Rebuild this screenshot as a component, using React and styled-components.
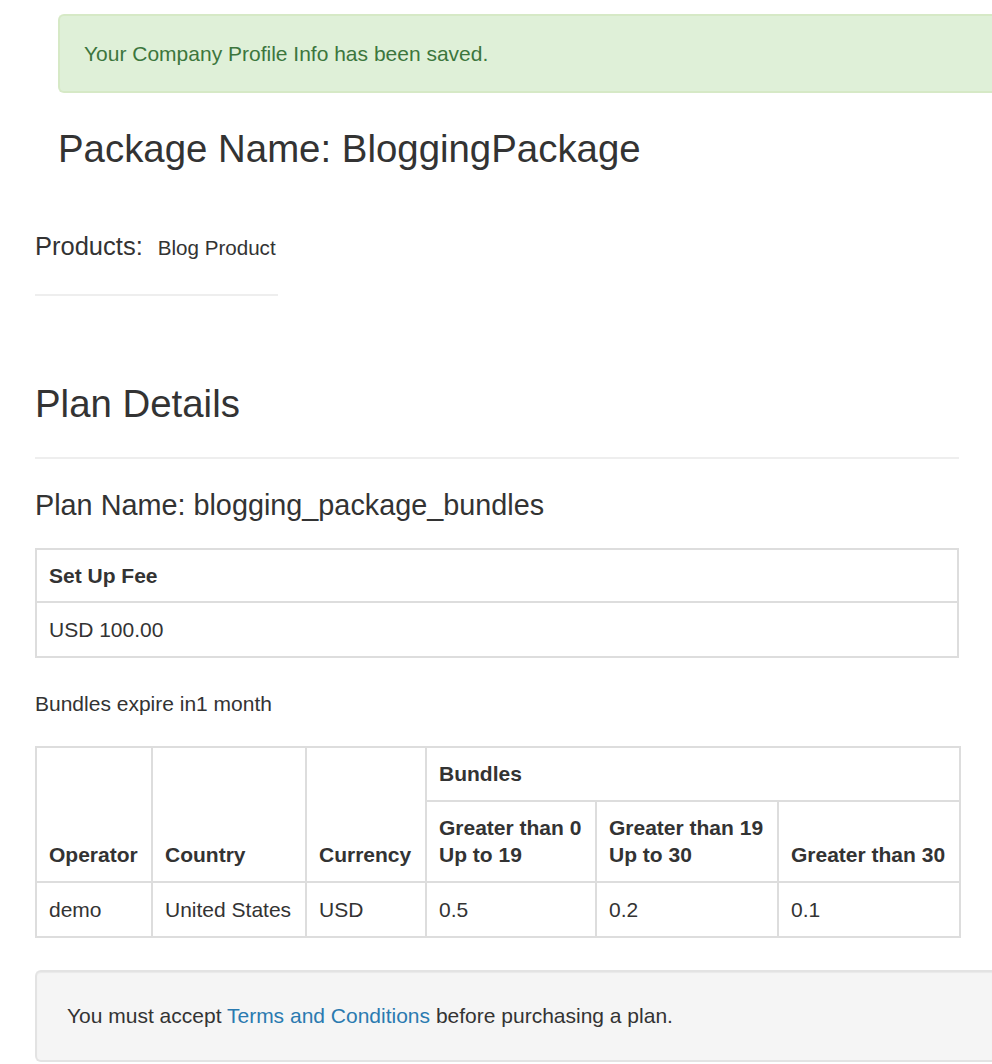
import React from 'react'
import styled, {createGlobalStyle} from 'styled-components';

const GlobalStyle = createGlobalStyle`
html, body {
  margin: 0;
  padding: 0;
  background: #fff;
  overflow-x: hidden;
}
body {
  font-family: "Liberation Sans", Helvetica, Arial, sans-serif;
  font-size: 21px;
  line-height: 30px;
  color: #333;
}
`

const Page = styled.div`
  width: 924px;
  padding-left: 35px;
  padding-top: 14px;
  padding-bottom: 40px;
`

// the alert and the well run on past the right edge of the window
const Notice = styled.div`
  margin-left: 23px;
  margin-right: -33px;
`

const SuccessAlert = styled.div`
  background-color: #dff0d8;
  border: 2px solid #d6e9c6;
  border-right: none;
  border-radius: 6px 0 0 6px;
  color: #3c763d;
  padding: 23px 24px 22px;
  line-height: 30px;
`

const Title = styled.h1`
  font-weight: 400;
  font-size: ${p => p.size || 38.4}px;
  line-height: 1.1;
  margin: ${p => p.margin || '0'};
  color: #333;
`

const ProductsRow = styled.div`
  display: flex;
  align-items: baseline;
  gap: 15px;
  margin-top: 61px;
  line-height: 30px;
`

const ProductsLabel = styled.span`
  font-size: 25.5px;
`

const ProductName = styled.span`
  font-size: 20.6px;
`

const Rule = styled.hr`
  border: 0;
  border-top: 2px solid #eee;
  margin: ${p => p.margin || '0'};
  width: ${p => p.width || '100%'};
  height: 0;
`

const Table = styled.table`
  width: 100%;
  border-collapse: collapse;
  table-layout: fixed;
  margin: ${p => p.margin || '0'};

  th, td {
    border: 2px solid #ddd;
    line-height: 27px;
    text-align: left;
    white-space: nowrap;
  }
  th {
    font-weight: 700;
    vertical-align: bottom;
    padding: ${p => p.headPad || '12px 12px 13px'};
  }
  td {
    vertical-align: top;
    padding: 13px 12px;
  }
`

const Col = styled.col`
  width: ${p => p.width}px;
`

const Line = styled.span`
  display: block;
`

const Expiry = styled.p`
  margin: 31px 0 0;
  line-height: 30px;
`

const Well = styled.div`
  margin: 32px -33px 0 0;
  background-color: #f5f5f5;
  border: 2px solid #e3e3e3;
  border-right: none;
  border-radius: 6px 0 0 6px;
  box-shadow: inset 0 1px 1px rgba(0, 0, 0, 0.05);
  padding: 29px 30px;
  line-height: 30px;
`

const Link = styled.a`
  color: #2a7ab0;
  text-decoration: none;
  cursor: pointer;
`

const tiers = [
  ['Greater than 0', 'Up to 19'],
  ['Greater than 19', 'Up to 30'],
  ['Greater than 30'],
]

const rows = [
  {operator: 'demo', country: 'United States', currency: 'USD', prices: ['0.5', '0.2', '0.1']},
]

export default function App() {
  return (
    <Page>
      <GlobalStyle />
      <Notice>
        <SuccessAlert>Your Company Profile Info has been saved.</SuccessAlert>
        <Title margin="35px 0 0">Package Name: BloggingPackage</Title>
      </Notice>

      <ProductsRow>
        <ProductsLabel>Products:</ProductsLabel>
        <ProductName>Blog Product</ProductName>
      </ProductsRow>
      <Rule width="243px" margin="31px 0 0" />

      <Title as="h2" margin="87px 0 0">Plan Details</Title>
      <Rule margin="32px 0 0" />

      <Title as="h3" size={28.8} margin="31px 0 0">Plan Name: blogging_package_bundles</Title>

      <Table margin="26px 0 0" headPad="12px 12px">
        <thead>
          <tr><th>Set Up Fee</th></tr>
        </thead>
        <tbody>
          <tr><td>USD 100.00</td></tr>
        </tbody>
      </Table>

      <Expiry>Bundles expire in1 month</Expiry>

      <Table margin="27px 0 0">
        <colgroup>
          <Col width={116} />
          <Col width={154} />
          <Col width={120} />
          <Col width={170} />
          <Col width={182} />
          <Col width={182} />
        </colgroup>
        <thead>
          <tr>
            <th rowSpan={2}>Operator</th>
            <th rowSpan={2}>Country</th>
            <th rowSpan={2}>Currency</th>
            <th colSpan={3}>Bundles</th>
          </tr>
          <tr>
            {tiers.map((t, i) => (
              <th key={i}>{t.map((l, j) => <Line key={j}>{l}</Line>)}</th>
            ))}
          </tr>
        </thead>
        <tbody>
          {rows.map((r, i) => (
            <tr key={i}>
              <td>{r.operator}</td>
              <td>{r.country}</td>
              <td>{r.currency}</td>
              {r.prices.map((p, j) => <td key={j}>{p}</td>)}
            </tr>
          ))}
        </tbody>
      </Table>

      <Well>
        You must accept <Link>Terms and Conditions</Link> before purchasing a plan.
      </Well>
    </Page>
  )
}
